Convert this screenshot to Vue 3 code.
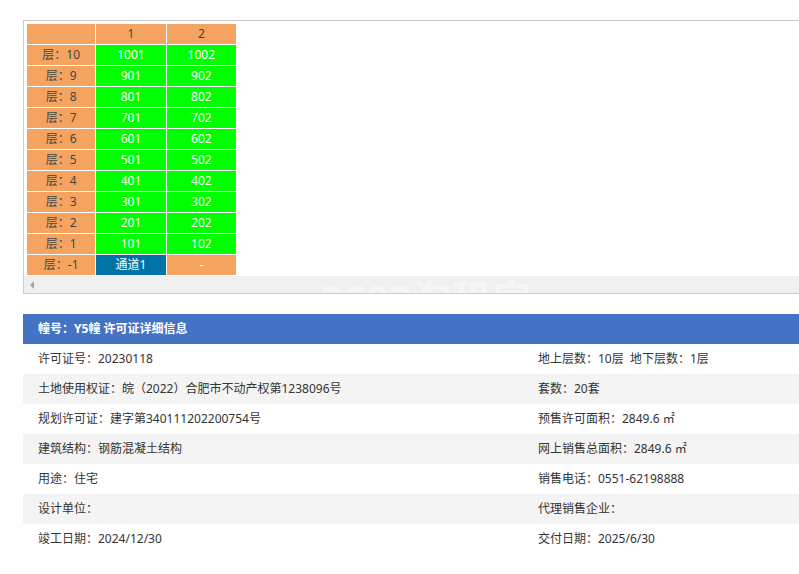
<script setup>
const floors = [10, 9, 8, 7, 6, 5, 4, 3, 2, 1]
const rows = [
  ['许可证号：20230118', '地上层数：10层&nbsp;&nbsp;地下层数：1层'],
  ['土地使用权证：皖（2022）合肥市不动产权第1238096号', '套数：20套'],
  ['规划许可证：建字第340111202200754号', '预售许可面积：2849.6 ㎡'],
  ['建筑结构：钢筋混凝土结构', '网上销售总面积：2849.6 ㎡'],
  ['用途：住宅', '销售电话：0551-62198888'],
  ['设计单位：', '代理销售企业：'],
  ['竣工日期：2024/12/30', '交付日期：2025/6/30'],
]
</script>

<template>
  <div class="page">
    <div class="scroll-box">
      <table class="units">
        <tbody>
          <tr>
            <td class="orange"></td>
            <td class="orange">1</td>
            <td class="orange">2</td>
          </tr>
          <tr v-for="f in floors" :key="f">
            <td class="orange">层：{{ f }}</td>
            <td class="green">{{ f }}01</td>
            <td class="green">{{ f }}02</td>
          </tr>
          <tr>
            <td class="orange">层：-1</td>
            <td class="blue">通道1</td>
            <td class="orange dash">-</td>
          </tr>
        </tbody>
      </table>
      <div class="scrollbar">
        <span class="arrow"></span>
        <span class="watermark">3603淘租房</span>
      </div>
    </div>
    <div class="info">
      <div class="info-title">幢号：Y5幢 许可证详细信息</div>
      <div v-for="(r, i) in rows" :key="i" class="info-row">
        <div>{{ r[0] }}</div>
        <div v-html="r[1]"></div>
      </div>
    </div>
  </div>
</template>

<style>
html, body { margin: 0; background: #fff; }
</style>

<style scoped>
.page {
  padding: 20px 0 20px 23px;
  font-family: "Noto Sans", "Noto Sans CJK SC", sans-serif;
  font-size: 12px;
  color: #333;
  overflow: hidden;
}
.scroll-box {
  border: 1px solid #ccc;
  border-right: none;
  padding: 2px 0 0 2px;
}
.units {
  border-collapse: separate;
  border-spacing: 1px;
  table-layout: fixed;
  width: 211px;
  font-size: 12px;
}
.units td {
  height: 20px;
  padding: 0;
  text-align: center;
  line-height: 20px;
  width: 69px;
}
.units td:first-child { width: 68px; }
.orange { background: #f4a460; color: #444; }
.green { background: #00ff00; color: #fff; }
.blue { background: #0073a5; color: #fff; }
.dash { color: #fff; }
.scrollbar {
  position: relative;
  height: 17px;
  background: #f0f0f0;
  margin: 0 0 0 -2px;
  overflow: hidden;
}
.arrow {
  position: absolute;
  left: 6px;
  top: 5px;
  border-style: solid;
  border-width: 4px 4px 4px 0;
  border-color: transparent #a3a3a3 transparent transparent;
}
.watermark {
  position: absolute;
  left: 296px;
  top: -2px;
  font-size: 40px;
  font-weight: 700;
  line-height: 50px;
  color: #fff;
  opacity: 0.45;
  white-space: nowrap;
}
.info { margin-top: 20px; }
.info-title {
  height: 30px;
  line-height: 30px;
  padding-left: 15px;
  background: #4472c4;
  color: #fff;
  font-weight: 700;
}
.info-row {
  display: grid;
  grid-template-columns: 500px 1fr;
  height: 30px;
  line-height: 30px;
}
.info-row > div { padding-left: 15px; }
.info-row:nth-of-type(odd) { background: #f4f4f4; }
</style>
